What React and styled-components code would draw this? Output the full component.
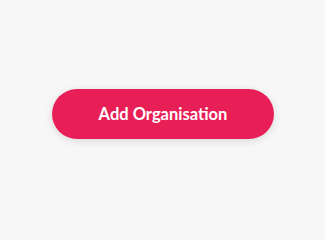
import React from "react";
import styled, { createGlobalStyle } from "styled-components";

const Global = createGlobalStyle`
  html, body { margin: 0; padding: 0; background: #f7f7f7; }
`;

const Page = styled.div`
  height: 227px;
  display: flex;
  align-items: center;
  justify-content: center;
  background: #f7f7f7;
`;

const Button = styled.button`
  width: 222px;
  height: 50px;
  margin-left: 1px;
  border: none;
  border-radius: 25px;
  background: #e81f56;
  color: #ffffff;
  font-family: Lato, "Liberation Sans", sans-serif;
  font-weight: 700;
  font-size: 16.5px;
  box-shadow: 0 2px 8px rgba(0, 0, 0, 0.12);
  cursor: pointer;
  padding: 0;
`;

export default function App() {
  return (
    <>
      <Global />
      <Page>
        <Button>Add Organisation</Button>
      </Page>
    </>
  );
}
